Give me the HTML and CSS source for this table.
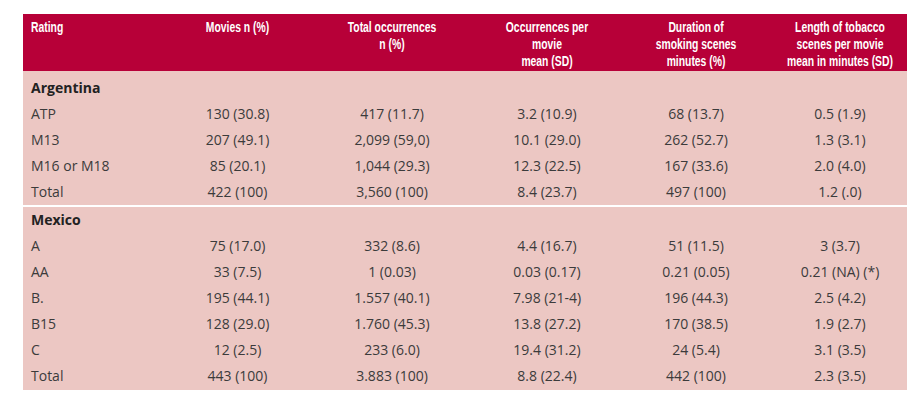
FILE: index.html
```html
<!DOCTYPE html>
<html lang="en">
<head>
<meta charset="utf-8">
<title>Tobacco scenes by rating</title>
<link rel="stylesheet" href="styles.css">
</head>
<body>
<div class="wrap">
<table class="data">
  <colgroup>
    <col class="c0"><col class="c1"><col class="c2"><col class="c3"><col class="c4"><col class="c5">
  </colgroup>
  <thead>
    <tr>
      <th class="first"><span class="h">Rating</span></th>
      <th><span class="h">Movies n (%)</span></th>
      <th><span class="h">Total occurrences<br>n (%)</span></th>
      <th><span class="h">Occurrences per<br>movie<br>mean (SD)</span></th>
      <th><span class="h">Duration of<br>smoking scenes<br>minutes (%)</span></th>
      <th><span class="h">Length of tobacco<br>scenes per movie<br>mean in minutes (SD)</span></th>
    </tr>
  </thead>
  <tbody class="grp grp-first">
    <tr class="country"><td class="first" colspan="6">Argentina</td></tr>
    <tr><td class="first">ATP</td><td>130 (30.8)</td><td>417 (11.7)</td><td>3.2 (10.9)</td><td>68 (13.7)</td><td>0.5 (1.9)</td></tr>
    <tr><td class="first">M13</td><td>207 (49.1)</td><td>2,099 (59,0)</td><td>10.1 (29.0)</td><td>262 (52.7)</td><td>1.3 (3.1)</td></tr>
    <tr><td class="first">M16 or M18</td><td>85 (20.1)</td><td>1,044 (29.3)</td><td>12.3 (22.5)</td><td>167 (33.6)</td><td>2.0 (4.0)</td></tr>
    <tr><td class="first">Total</td><td>422 (100)</td><td>3,560 (100)</td><td>8.4 (23.7)</td><td>497 (100)</td><td>1.2 (.0)</td></tr>
  </tbody>
  <tbody class="grp grp-second">
    <tr class="country"><td class="first" colspan="6">Mexico</td></tr>
    <tr><td class="first">A</td><td>75 (17.0)</td><td>332 (8.6)</td><td>4.4 (16.7)</td><td>51 (11.5)</td><td>3 (3.7)</td></tr>
    <tr><td class="first">AA</td><td>33 (7.5)</td><td>1 (0.03)</td><td>0.03 (0.17)</td><td>0.21 (0.05)</td><td>0.21 (NA) (*)</td></tr>
    <tr><td class="first">B.</td><td>195 (44.1)</td><td>1.557 (40.1)</td><td>7.98 (21-4)</td><td>196 (44.3)</td><td>2.5 (4.2)</td></tr>
    <tr><td class="first">B15</td><td>128 (29.0)</td><td>1.760 (45.3)</td><td>13.8 (27.2)</td><td>170 (38.5)</td><td>1.9 (2.7)</td></tr>
    <tr><td class="first">C</td><td>12 (2.5)</td><td>233 (6.0)</td><td>19.4 (31.2)</td><td>24 (5.4)</td><td>3.1 (3.5)</td></tr>
    <tr><td class="first">Total</td><td>443 (100)</td><td>3.883 (100)</td><td>8.8 (22.4)</td><td>442 (100)</td><td>2.3 (3.5)</td></tr>
  </tbody>
</table>
</div>
</body>
</html>
```

FILE: styles.css
```css
html, body {
  margin: 0;
  padding: 0;
  background: #ffffff;
}

.wrap {
  padding: 14px 0 0 23px;
}

.data {
  width: 884px;
  table-layout: fixed;
  border-collapse: collapse;
  border-spacing: 0;
  font-family: "Open Sans", "Noto Sans", "DejaVu Sans", sans-serif;
}

.c0 { width: 143px; }
.c1 { width: 143px; }
.c2 { width: 166px; }
.c3 { width: 144px; }
.c4 { width: 154px; }
.c5 { width: 134px; }

.data thead th {
  background: #b70038;
  color: #ffffff;
  font-family: "Liberation Sans", Arial, sans-serif;
  font-weight: bold;
  font-size: 14px;
  line-height: 17px;
  text-align: center;
  vertical-align: top;
  padding: 5px 0 1px;
  height: 51px;
  overflow: visible;
}

.data thead th .h {
  display: block;
  margin: 0 -24px;
  white-space: nowrap;
  transform: scaleX(0.74);
  transform-origin: 50% 0;
}

.data thead th.first {
  text-align: left;
  padding-left: 8px;
}

.data thead th.first .h {
  margin: 0;
  transform-origin: 0 0;
}

.data tbody td {
  background: #ecc7c3;
  color: #3b3b3b;
  font-size: 14px;
  line-height: 26px;
  height: 26px;
  padding: 0 8px;
  text-align: center;
  white-space: nowrap;
}

.data tbody td.first {
  text-align: left;
  padding-left: 8px;
}

.data tr.country td {
  font-weight: bold;
  color: #222222;
}

.grp-first tr:first-child td {
  padding-top: 4px;
}

.grp-second {
  border-top: 2px solid #ffffff;
}

.grp-second tr:last-child td {
  padding-bottom: 1px;
}
```
